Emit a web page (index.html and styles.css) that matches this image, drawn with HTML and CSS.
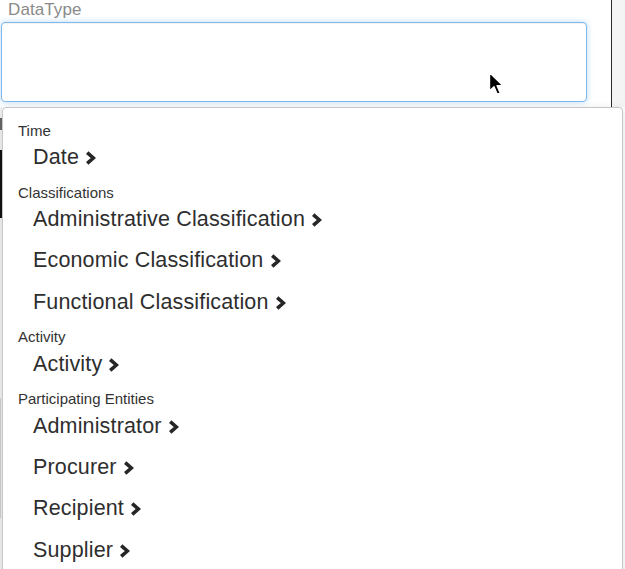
FILE: index.html
```html
<!DOCTYPE html>
<html>
<head>
<meta charset="utf-8">
<link rel="stylesheet" href="styles.css">
</head>
<body>
<div class="page">
  <div class="top">
    <div class="form">
      <label class="label">DataType</label>
      <div class="input"></div>
    </div>
    <div class="divider"></div>
    <div class="side"></div>
  </div>
  <div class="lower">
    <div class="edge">
      <div class="seg seg-a"></div>
      <div class="seg seg-b"></div>
      <div class="seg seg-c"></div>
    </div>
    <div class="menu">
      <div class="heading">Time</div>
      <div class="item">Date <svg class="chev" viewBox="0 0 11 14"><polyline points="2.2,1.6 8.4,7 2.2,12.4"/></svg></div>
      <div class="heading">Classifications</div>
      <div class="item">Administrative Classification <svg class="chev" viewBox="0 0 11 14"><polyline points="2.2,1.6 8.4,7 2.2,12.4"/></svg></div>
      <div class="item">Economic Classification <svg class="chev" viewBox="0 0 11 14"><polyline points="2.2,1.6 8.4,7 2.2,12.4"/></svg></div>
      <div class="item">Functional Classification <svg class="chev" viewBox="0 0 11 14"><polyline points="2.2,1.6 8.4,7 2.2,12.4"/></svg></div>
      <div class="heading">Activity</div>
      <div class="item">Activity <svg class="chev" viewBox="0 0 11 14"><polyline points="2.2,1.6 8.4,7 2.2,12.4"/></svg></div>
      <div class="heading">Participating Entities</div>
      <div class="item">Administrator <svg class="chev" viewBox="0 0 11 14"><polyline points="2.2,1.6 8.4,7 2.2,12.4"/></svg></div>
      <div class="item">Procurer <svg class="chev" viewBox="0 0 11 14"><polyline points="2.2,1.6 8.4,7 2.2,12.4"/></svg></div>
      <div class="item">Recipient <svg class="chev" viewBox="0 0 11 14"><polyline points="2.2,1.6 8.4,7 2.2,12.4"/></svg></div>
      <div class="item">Supplier <svg class="chev" viewBox="0 0 11 14"><polyline points="2.2,1.6 8.4,7 2.2,12.4"/></svg></div>
    </div>
  </div>
  <svg class="cursor" viewBox="0 0 16 26" width="16" height="26">
    <path d="M1.5,1.5 L1.5,20 L6,15.8 L9.2,23.2 L12.2,21.9 L9.1,14.7 L15,14.7 Z" fill="#000" stroke="#fff" stroke-width="1.4" stroke-linejoin="round"/>
  </svg>
</div>
</body>
</html>
```
FILE: styles.css
```css
* { box-sizing: border-box; }
html, body { margin: 0; padding: 0; background: #fff; }
body {
  font-family: "Liberation Sans", Arial, Helvetica, sans-serif;
  color: #333;
  overflow: hidden;
}
.page { position: relative; width: 625px; height: 569px; overflow: hidden; }

.top { display: flex; height: 107px; }
.form { width: 611px; background: #fff; }
.label {
  display: block;
  padding-left: 8px;
  font-size: 17px;
  line-height: 19px;
  color: #8a8a8a;
  letter-spacing: 0.1px;
}
.input {
  margin-top: 3px;
  margin-left: 1px;
  width: 586px;
  height: 80px;
  border: 1px solid #7fb8ec;
  border-radius: 4px;
  box-shadow: inset 0 1px 1px rgba(0,0,0,.05), 0 0 6px rgba(102,175,233,.45);
  background: #fff;
}
.divider { width: 1px; background: #2a2a2a; }
.side { flex: 1; background: #f4f4f4; }

.lower { display: flex; }
.edge { width: 2px; display: flex; flex-direction: column; background: #f2f2f2; }
.seg { width: 2px; }
.seg-a { margin-top: 11px; height: 12px; background: #666; }
.seg-b { margin-top: 20px; height: 68px; background: #111; }
.seg-c { margin-top: 180px; height: 120px; background: #cfcfcf; width: 1px; }

.menu {
  width: 621px;
  height: 480px;
  border: 1px solid #c6c6c6;
  border-radius: 4px 4px 0 0;
  box-shadow: 0 2px 8px rgba(0,0,0,.12);
  background: #fff;
  padding: 10px 0 0 0;
}
.heading {
  margin-top: 4.6px;
  padding-left: 15px;
  font-size: 15px;
  line-height: 16px;
  color: #333;
}
.item {
  padding: 6.67px 0 10.66px 30px;
  font-size: 21.5px;
  line-height: 24px;
  letter-spacing: 0.15px;
  color: #2e2e2e;
  white-space: nowrap;
}
.chev {
  width: 11px;
  height: 14px;
  margin-left: 0;
  vertical-align: -1px;
}
.chev polyline {
  fill: none;
  stroke: #262626;
  stroke-width: 3.6;
  stroke-linejoin: miter;
}
.cursor { position: absolute; left: 488px; top: 71px; }
```
